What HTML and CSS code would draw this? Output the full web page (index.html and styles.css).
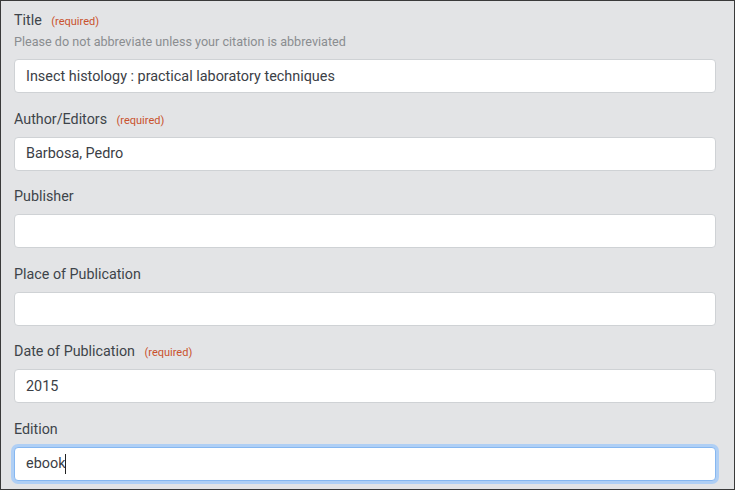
FILE: index.html
```html
<!DOCTYPE html>
<html lang="en">
<head>
<meta charset="utf-8">
<title>Citation form</title>
<link rel="stylesheet" href="styles.css">
</head>
<body>
<form class="panel">
  <div class="group">
    <label class="label" for="title">Title <span class="req">(required)</span></label>
    <div class="hint">Please do not abbreviate unless your citation is abbreviated</div>
    <input class="field" id="title" type="text" value="Insect histology : practical laboratory techniques">
  </div>
  <div class="group">
    <label class="label" for="author">Author/Editors <span class="req">(required)</span></label>
    <input class="field" id="author" type="text" value="Barbosa, Pedro">
  </div>
  <div class="group">
    <label class="label" for="publisher">Publisher</label>
    <input class="field" id="publisher" type="text" value="">
  </div>
  <div class="group">
    <label class="label" for="place">Place of Publication</label>
    <input class="field" id="place" type="text" value="">
  </div>
  <div class="group">
    <label class="label" for="date">Date of Publication <span class="req">(required)</span></label>
    <input class="field" id="date" type="text" value="2015">
  </div>
  <div class="group">
    <label class="label" for="edition">Edition</label>
    <div class="field-wrap">
      <input class="field focused" id="edition" type="text" value="ebook">
      <span class="caret"></span>
    </div>
  </div>
</form>
</body>
</html>
```
FILE: styles.css
```css
html, body {
  margin: 0;
  padding: 0;
}
body {
  font-family: Roboto, "Liberation Sans", Arial, sans-serif;
  background: #e3e4e6;
}
.panel {
  box-sizing: border-box;
  width: 735px;
  height: 490px;
  border: 1px solid #3a3a3a;
  background: #e3e4e6;
  padding: 9px 18px 0 13px;
  overflow: hidden;
  display: flex;
  flex-direction: column;
}
.group {
  display: flex;
  flex-direction: column;
  margin-bottom: 15.5px;
}
.label {
  display: block;
  height: 20px;
  font-size: 14.3px;
  line-height: 20px;
  color: #3e444a;
  margin-bottom: 8px;
}
.group:first-child .label {
  margin-bottom: 2px;
}
.req {
  font-size: 11px;
  line-height: 1;
  color: #c9522d;
  margin-left: 6px;
}
.hint {
  font-size: 12.6px;
  line-height: 20px;
  color: #8a8d90;
  margin-bottom: 7px;
}
.field-wrap {
  position: relative;
}
.field {
  box-sizing: border-box;
  display: block;
  height: 34px;
  width: 100%;
  border: 1px solid #cfd2d5;
  border-radius: 4px;
  background: #ffffff;
  padding: 0 11px;
  font-family: Roboto, "Liberation Sans", Arial, sans-serif;
  font-size: 14.4px;
  color: #3b4046;
  outline: none;
}
.field.focused,
.field:focus {
  border-color: #86b7f0;
  box-shadow: 0 0 0 3px #afcff5;
}
.caret {
  position: absolute;
  left: 51px;
  top: 7px;
  width: 1px;
  height: 20px;
  background: #222;
}
```
